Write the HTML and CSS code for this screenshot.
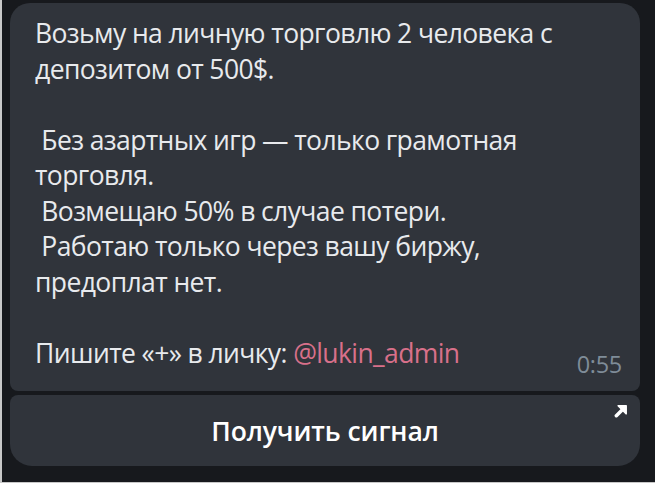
FILE: index.html
```html
<!DOCTYPE html>
<html lang="ru">
<head>
<meta charset="utf-8">
<link rel="stylesheet" href="styles.css">
</head>
<body>
<div class="screen">
  <div class="message">
    <div class="bubble">
      <p class="line">Возьму на личную торговлю 2 человека с</p>
      <p class="line">депозитом от 500$.</p>
      <p class="line blank">&nbsp;</p>
      <p class="line">&nbsp;Без азартных игр — только грамотная</p>
      <p class="line">торговля.</p>
      <p class="line">&nbsp;Возмещаю 50% в случае потери.</p>
      <p class="line">&nbsp;Работаю только через вашу биржу,</p>
      <p class="line">предоплат нет.</p>
      <p class="line blank">&nbsp;</p>
      <div class="last-row">
        <p class="line">Пишите «+» в личку: <span class="mention">@lukin_admin</span></p>
        <span class="time">0:55</span>
      </div>
    </div>
    <div class="button">
      <span class="button-label">Получить сигнал</span>
      <svg class="arrow" width="14" height="14" viewBox="0 0 12 12">
        <path d="M2 10 L8 4" stroke="#ffffff" stroke-width="3" stroke-linecap="round" fill="none"/>
        <path d="M3.5 1.5 H10.5 V8.5 Z" fill="#ffffff" stroke="#ffffff" stroke-width="1.2" stroke-linejoin="round"/>
      </svg>
    </div>
  </div>
</div>
</body>
</html>
```
FILE: styles.css
```css
html, body {
  margin: 0;
  padding: 0;
  background: #17191d;
}
.screen {
  width: 655px;
  height: 483px;
  box-sizing: border-box;
  border-left: 2px solid #c8c8c8;
  border-bottom: 1px solid #c8c8c8;
  padding: 3px 15px 0 8px;
  font-family: "Open Sans", "Noto Sans", sans-serif;
}
.message {
  display: flex;
  flex-direction: column;
  gap: 4px;
}
.bubble {
  background: #30343b;
  border-radius: 20px 20px 8px 8px;
  padding: 13px 18px 15px 25px;
  color: #e8eaed;
}
.line {
  margin: 0;
  font-size: 26.5px;
  line-height: 35.5px;
  white-space: pre;
  letter-spacing: -0.6px;
}
.last-row {
  display: flex;
  justify-content: space-between;
  align-items: flex-start;
}
.mention {
  color: #d8708a;
}
.time {
  color: #7f8c98;
  font-size: 23.5px;
  line-height: 24px;
  margin-top: 16px;
  letter-spacing: -0.3px;
}
.button {
  position: relative;
  height: 71px;
  background: #30343b;
  border-radius: 8px 8px 22px 22px;
  display: flex;
  align-items: center;
  justify-content: center;
}
.button-label {
  color: #ffffff;
  font-size: 26.5px;
  font-weight: 600;
  letter-spacing: -0.1px;
  margin-top: 1px;
}
.arrow {
  position: absolute;
  top: 9px;
  right: 12px;
}
```
